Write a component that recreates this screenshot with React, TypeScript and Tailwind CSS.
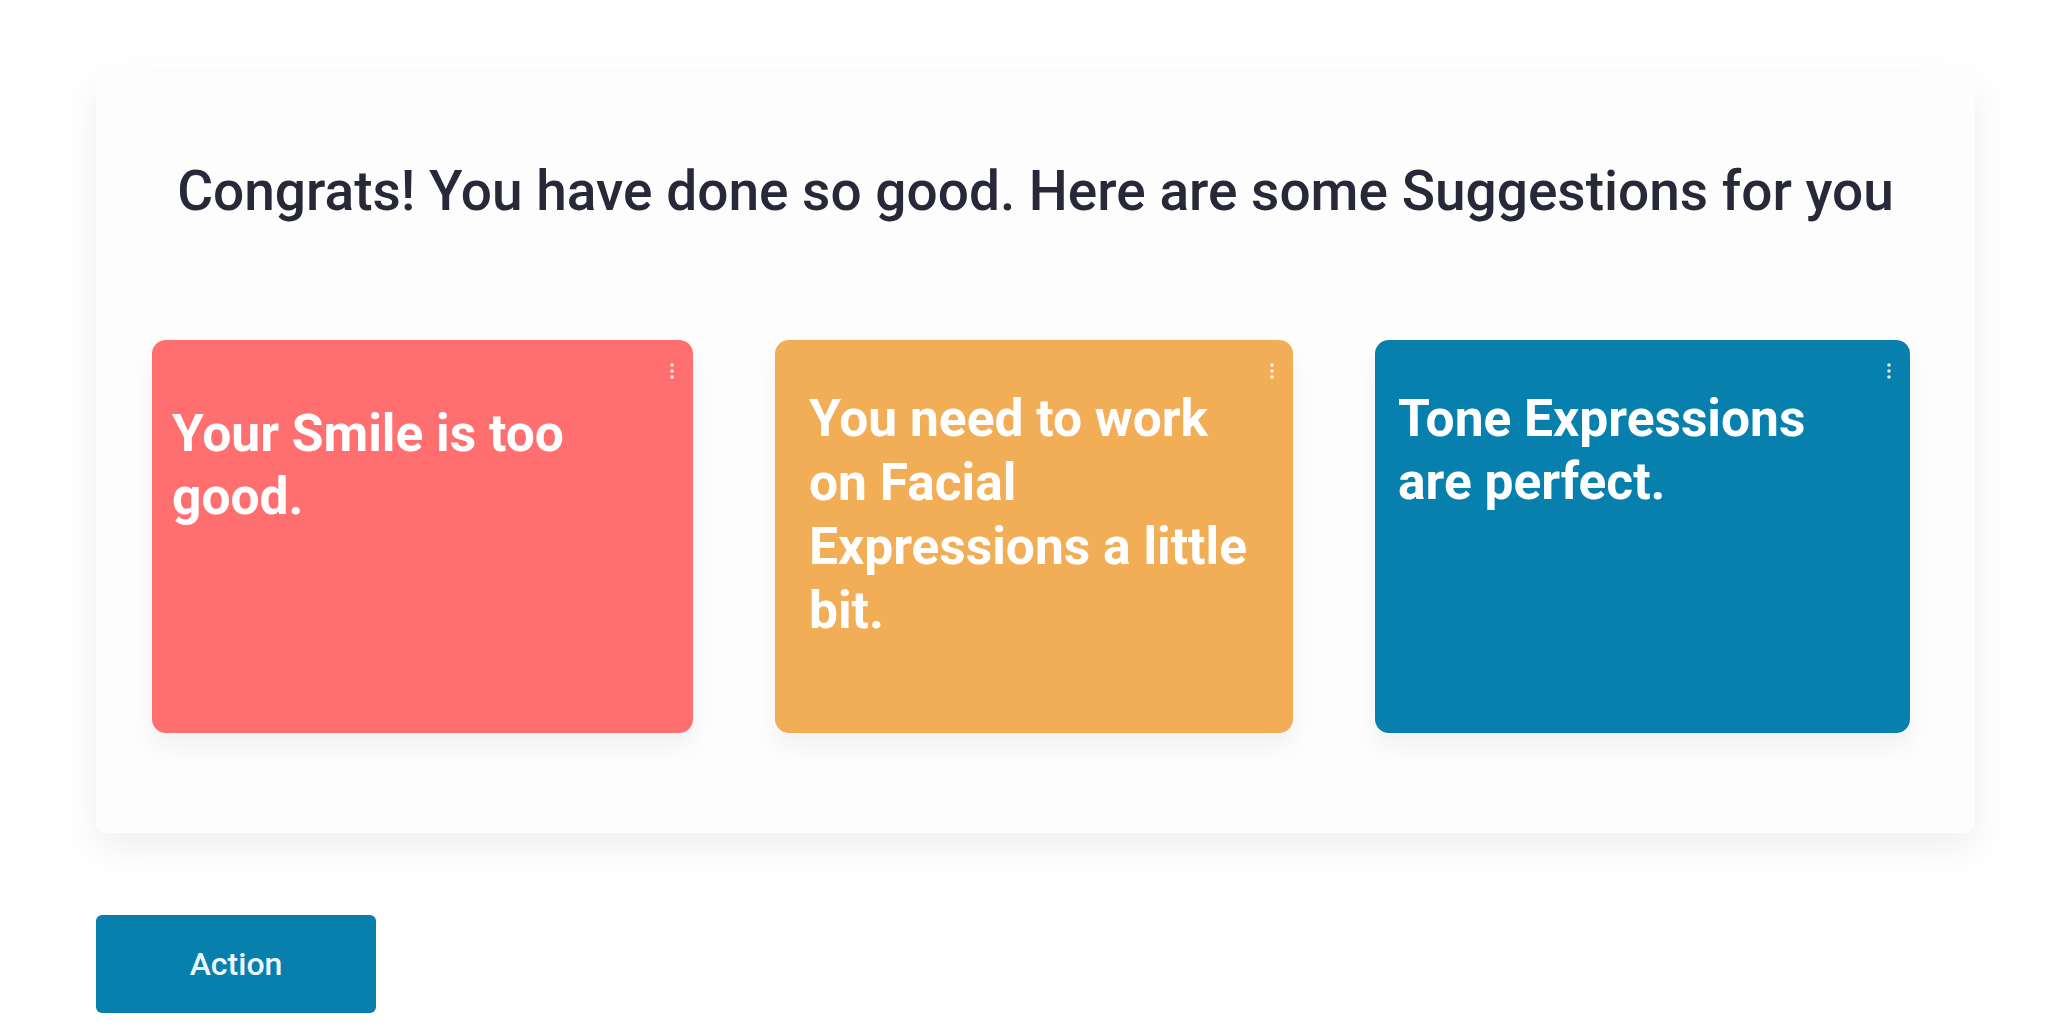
import React from "react";

function Dots() {
  return (
    <svg width="6" height="18" viewBox="0 0 6 18" className="absolute right-[18px] top-[22px]" aria-hidden="true">
      <circle cx="3" cy="3" r="1.8" fill="rgba(255,255,255,0.85)" />
      <circle cx="3" cy="9" r="1.8" fill="rgba(255,255,255,0.85)" />
      <circle cx="3" cy="15" r="1.8" fill="rgba(255,255,255,0.85)" />
    </svg>
  );
}

export default function App() {
  return (
    <div
      className="min-h-screen w-full bg-white px-[96px] pt-[73px]"
      style={{ fontFamily: "Roboto, 'Noto Sans', sans-serif" }}
    >
      <div className="flex w-[1879px] flex-col rounded-[10px] bg-[#fdfdfd] pb-[100px] pt-[86px] shadow-[0_14px_40px_rgba(0,0,0,0.07)]">
        <h1 className="text-center text-[55px] font-medium leading-[65px] text-[#272838]">
          Congrats! You have done so good. Here are some Suggestions for you
        </h1>
        <div className="mt-[116px] flex gap-[82px] pl-[56px]">
          <div className="relative h-[393px] w-[541px] rounded-[14px] bg-[#ff6f6f] pl-[20px] pt-[62px] shadow-[0_14px_24px_rgba(0,0,0,0.05)]">
            <Dots />
            <p className="text-[51.5px] font-bold leading-[63px] text-white">
              Your Smile is too
              <br />
              good.
            </p>
          </div>
          <div className="relative h-[393px] w-[518px] rounded-[14px] bg-[#f2ad57] pl-[34px] pt-[47px] shadow-[0_14px_24px_rgba(0,0,0,0.05)]">
            <Dots />
            <p className="text-[51.5px] font-bold leading-[64px] text-white">
              You need to work
              <br />
              on Facial
              <br />
              Expressions a little
              <br />
              bit.
            </p>
          </div>
          <div className="relative h-[393px] w-[535px] rounded-[14px] bg-[#0880ae] pl-[23px] pt-[47px] shadow-[0_14px_24px_rgba(0,0,0,0.05)]">
            <Dots />
            <p className="text-[51.5px] font-bold leading-[63px] text-white">
              Tone Expressions
              <br />
              are perfect.
            </p>
          </div>
        </div>
      </div>
      <button className="mt-[82px] flex h-[98px] w-[280px] items-center justify-center rounded-[6px] bg-[#0880ae] text-[32px] font-medium text-[#eef8ff]">
        Action
      </button>
    </div>
  );
}
